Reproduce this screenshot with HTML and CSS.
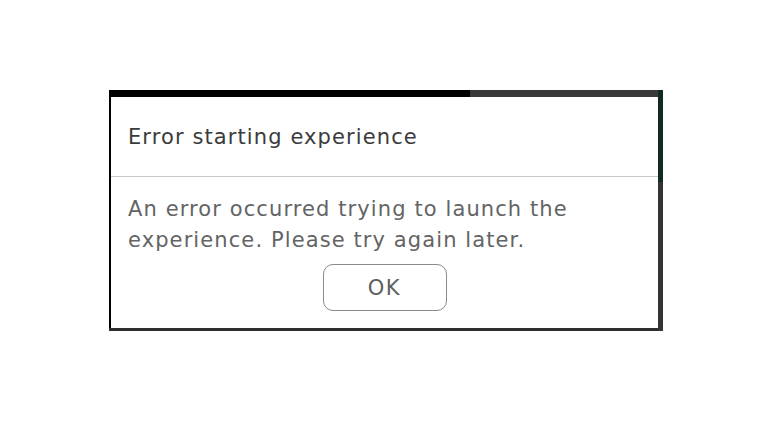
FILE: index.html
```html
<!DOCTYPE html>
<html>
<head>
<meta charset="utf-8">
<link rel="stylesheet" href="styles.css">
</head>
<body>
<div class="page">
  <div class="frame">
    <div class="dialog">
      <div class="dialog-header">
        <h1 class="dialog-title">Error starting experience</h1>
      </div>
      <div class="dialog-body">
        <p class="dialog-message">An error occurred trying to launch the experience. Please try again later.</p>
        <div class="dialog-actions">
          <button class="btn-ok">OK</button>
        </div>
      </div>
    </div>
  </div>
</div>
</body>
</html>
```
FILE: styles.css
```css
html, body {
  margin: 0;
  padding: 0;
  background: #ffffff;
}
.page {
  padding: 90px 0 0 109px;
}
.frame {
  width: 547px;
  padding: 7px 5px 3px 2px;
  background:
    linear-gradient(to bottom, #0f2b23 0, #0f2b23 92px, #333333 92px) right top / 5px 100% no-repeat,
    linear-gradient(to bottom, transparent 0, transparent 238px, #2e2e2e 238px) left top / 100% 100% no-repeat,
    linear-gradient(to right, #000000 0, #000000 361px, #3a3a3a 361px);
}
.dialog {
  background: #ffffff;
  height: 231px;
  display: flex;
  flex-direction: column;
}
.dialog-header {
  height: 80px;
  border-bottom: 1px solid #c9c9c9;
  padding-left: 17px;
  display: flex;
  align-items: center;
  box-sizing: border-box;
}
.dialog-title {
  margin: 0;
  font-family: "DejaVu Sans", sans-serif;
  font-weight: normal;
  font-size: 21px;
  letter-spacing: 1.1px;
  color: #3a3b3c;
}
.dialog-body {
  padding: 17px 17px 0 17px;
}
.dialog-message {
  margin: 0;
  font-family: "DejaVu Sans", sans-serif;
  font-size: 21px;
  letter-spacing: 1.1px;
  line-height: 31px;
  color: #636465;
  width: 500px;
}
.dialog-actions {
  display: flex;
  justify-content: center;
  padding-top: 8px;
}
.btn-ok {
  width: 124px;
  height: 47px;
  border: 1px solid #8a8a8a;
  border-radius: 10px;
  background: #ffffff;
  font-family: "DejaVu Sans", sans-serif;
  font-size: 21px;
  color: #606060;
  letter-spacing: 1.5px;
}
```
